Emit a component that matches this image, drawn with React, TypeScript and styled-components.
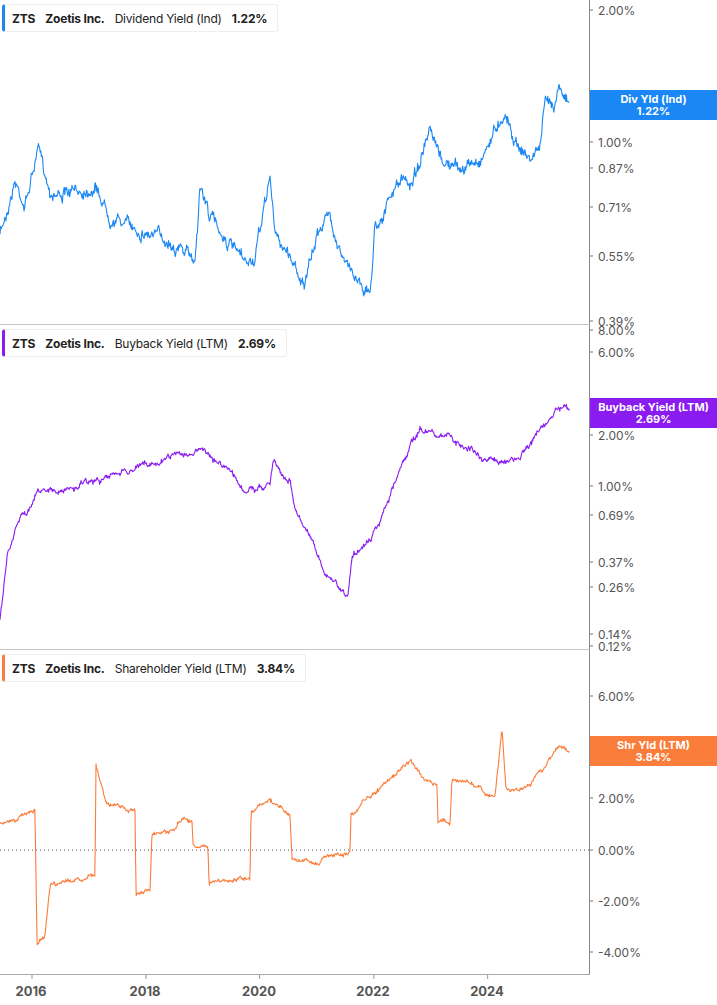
import styled, { createGlobalStyle } from 'styled-components';

const GlobalStyle = createGlobalStyle`
  body { margin: 0; background: #fff; font-family: Inter, "Noto Sans", sans-serif; }
`;

const PLOT_W = 590;
const PANEL_H = 325;

const Page = styled.div`
  width: 717px;
  height: 1005px;
  display: flex;
  flex-direction: column;
  overflow: hidden;
`;

const PanelRow = styled.div`
  display: flex;
  height: ${PANEL_H}px;
`;

const Plot = styled.div<{ $last?: boolean }>`
  position: relative;
  width: ${PLOT_W}px;
  flex-shrink: 0;
  border-right: 1px solid #8a8a8a;
  border-bottom: 1px solid ${(p) => (p.$last ? '#aaa' : '#c8c8c8')};
  box-sizing: border-box;
`;

const Axis = styled.div`
  position: relative;
  flex: 1;
`;

const Legend = styled.div<{ $color: string }>`
  position: absolute;
  top: 4px;
  left: 2px;
  display: flex;
  gap: 10px;
  align-items: center;
  height: 26px;
  padding: 0 10px 0 7px;
  background: #fff;
  border: 1px solid #eee;
  border-left: 3px solid ${(p) => p.$color};
  border-radius: 3px;
  font-size: 12px;
  letter-spacing: -0.2px;
  color: #222;
  white-space: nowrap;
`;

const B = styled.span`
  font-weight: 700;
`;

const TickLabel = styled.div`
  position: absolute;
  left: 6px;
  transform: translateY(-50%);
  font-size: 12px;
  color: #555;
  display: flex;
  align-items: center;
  gap: 5px;
  &::before {
    content: '';
    width: 3px;
    height: 1px;
    background: #777;
    margin-left: -6px;
  }
`;

const Badge = styled.div<{ $color: string }>`
  position: absolute;
  left: 0;
  right: 0;
  height: 30px;
  background: ${(p) => p.$color};
  color: #fff;
  font-size: 11px;
  font-weight: 700;
  display: flex;
  flex-direction: column;
  align-items: center;
  justify-content: center;
  line-height: 12px;
`;

const XAxisRow = styled.div`
  position: relative;
  height: 30px;
  width: ${PLOT_W}px;
`;

const Year = styled.div`
  position: absolute;
  top: 8px;
  transform: translateX(-50%);
  font-size: 13px;
  font-weight: 700;
  color: #555;
  &::before {
    content: '';
    position: absolute;
    left: 50%;
    top: -8px;
    width: 1px;
    height: 4px;
    background: #999;
  }
`;

type Pt = [number, number];

function rng(seed: number) {
  let s = seed;
  return () => {
    s = (s * 16807) % 2147483647;
    return s / 2147483647 - 0.5;
  };
}

function buildPath(keys: Pt[], noise: number, seed: number, offset: number) {
  const r = rng(seed);
  const pts: string[] = [];
  let k = 0;
  let drift = 0;
  for (let x = keys[0][0]; x <= keys[keys.length - 1][0]; x += 0.6) {
    while (k < keys.length - 2 && x > keys[k + 1][0]) k++;
    const [x0, y0] = keys[k];
    const [x1, y1] = keys[k + 1];
    const t = x1 === x0 ? 1 : Math.min(1, Math.max(0, (x - x0) / (x1 - x0)));
    drift = drift * 0.85 + r() * noise;
    const y = y0 + (y1 - y0) * t + drift + r() * noise * 0.9 - offset;
    pts.push(`${x.toFixed(1)},${y.toFixed(1)}`);
  }
  return 'M' + pts.join(' L');
}

const divKeys: Pt[] = [[0,235],[15,180],[25,205],[38,150],[50,190],[70,195],[95,185],[110,215],[140,230],[170,240],[195,260],[200,185],[210,215],[230,245],[245,265],[255,260],[270,175],[275,235],[290,255],[305,285],[320,225],[330,215],[345,265],[360,280],[370,295],[375,225],[385,210],[400,180],[410,185],[430,135],[440,160],[460,170],[480,160],[505,110],[515,140],[530,160],[540,145],[545,105],[555,100],[560,80],[570,110]];
const bbKeys: Pt[] = [[0,620],[8,550],[20,520],[40,490],[60,490],[100,480],[130,470],[160,460],[200,450],[230,470],[245,490],[270,485],[273,463],[290,480],[295,510],[310,535],[325,575],[348,598],[352,555],[370,540],[380,520],[400,470],[410,450],[420,428],[440,435],[465,445],[485,460],[500,465],[520,455],[540,430],[555,410],[565,408],[570,413]];
const shKeys: Pt[] = [[0,825],[35,810],[37,945],[45,935],[50,885],[95,877],[96,765],[107,805],[135,810],[136,895],[150,890],[152,835],[175,830],[178,822],[192,822],[193,845],[208,845],[209,883],[250,877],[251,810],[270,800],[290,815],[292,858],[320,865],[325,855],[350,853],[351,815],[365,800],[380,790],[410,760],[425,780],[437,785],[438,822],[450,822],[452,780],[480,785],[485,795],[495,795],[502,730],[506,790],[520,790],[530,785],[545,765],[560,745],[570,752]];

interface PanelDef {
  color: string;
  metric: string;
  value: string;
  badge: string;
  badgeTop: number;
  keys: Pt[];
  noise: number;
  top: number;
  ticks: [string, number][];
  zeroLine?: number;
}

const panels: PanelDef[] = [
  { color: '#1a87f5', metric: 'Dividend Yield (Ind)', value: '1.22%', badge: 'Div Yld (Ind)', badgeTop: 90, keys: divKeys, noise: 7, top: 0,
    ticks: [['2.00%',10],['1.00%',142],['0.87%',168],['0.71%',207],['0.55%',256],['0.39%',321]] },
  { color: '#8a1cf0', metric: 'Buyback Yield (LTM)', value: '2.69%', badge: 'Buyback Yield (LTM)', badgeTop: 398, keys: bbKeys, noise: 3.5, top: 325,
    ticks: [['8.00%',330],['6.00%',352],['2.00%',435],['1.00%',486],['0.69%',515],['0.37%',562],['0.26%',587],['0.14%',634],['0.12%',646]] },
  { color: '#fb7d3c', metric: 'Shareholder Yield (LTM)', value: '3.84%', badge: 'Shr Yld (LTM)', badgeTop: 736, keys: shKeys, noise: 2.5, top: 650,
    ticks: [['6.00%',696],['4.00%',746],['2.00%',798],['0.00%',850],['-2.00%',901],['-4.00%',952]], zeroLine: 850 },
];

const years = ['2016', '2018', '2020', '2022', '2024'];

export default function App() {
  return (
    <Page>
      <GlobalStyle />
      {panels.map((p, i) => (
        <PanelRow key={p.metric}>
          <Plot $last={i === panels.length - 1}>
            <svg width={PLOT_W - 1} height={PANEL_H - 1}>
              {p.zeroLine && (
                <line x1={0} x2={PLOT_W} y1={p.zeroLine - p.top} y2={p.zeroLine - p.top} stroke="#555" strokeDasharray="1 3" />
              )}
              <path d={buildPath(p.keys, p.noise, 7 + i * 31, p.top)} fill="none" stroke={p.color} strokeWidth={1.1} strokeLinejoin="round" />
            </svg>
            <Legend $color={p.color}>
              <B>ZTS</B>
              <B>Zoetis Inc.</B>
              <span>{p.metric}</span>
              <B>{p.value}</B>
            </Legend>
          </Plot>
          <Axis>
            {p.ticks.map(([t, y]) => (
              <TickLabel key={t} style={{ top: y - p.top }}>{t}</TickLabel>
            ))}
            <Badge $color={p.color} style={{ top: p.badgeTop - p.top }}>
              <span>{p.badge}</span>
              <span>{p.value}</span>
            </Badge>
          </Axis>
        </PanelRow>
      ))}
      <XAxisRow>
        {years.map((y, i) => (
          <Year key={y} style={{ left: 31 + i * 114 }}>{y}</Year>
        ))}
      </XAxisRow>
    </Page>
  );
}
